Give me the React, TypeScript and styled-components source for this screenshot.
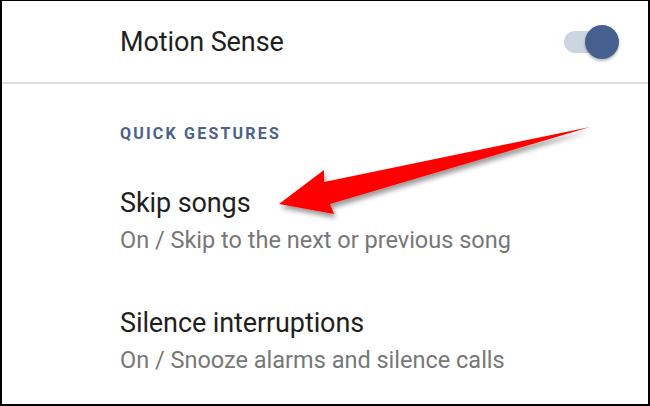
import React from "react";
import styled, { createGlobalStyle } from "styled-components";

const Global = createGlobalStyle`
  html, body { margin: 0; padding: 0; background: #fff; }
  body { font-family: Roboto, "Noto Sans", sans-serif; }
`;

const Frame = styled.div`
  position: relative;
  width: 650px;
  height: 406px;
  box-sizing: border-box;
  border-style: solid;
  border-color: #000;
  border-width: 1px 2px 2px 2px;
  padding-bottom: 6px;
  background: #fff;
  display: flex;
  flex-direction: column;
  overflow: hidden;
`;

const HeaderRow = styled.div`
  flex: 0 0 81px;
  display: flex;
  align-items: center;
  justify-content: space-between;
  padding: 0 29px 0 118px;
  box-sizing: border-box;
`;

const Title = styled.div`
  font-size: 27px;
  color: #1f1f1f;
  line-height: 32px;
  letter-spacing: -0.1px;
`;

const Switch = styled.div`
  position: relative;
  width: 55px;
  height: 34px;
`;

const Track = styled.div`
  position: absolute;
  left: 0;
  top: 6px;
  width: 46px;
  height: 22px;
  border-radius: 11px;
  background: #cdd5e1;
`;

const Thumb = styled.div`
  position: absolute;
  right: 0;
  top: 0;
  width: 34px;
  height: 34px;
  border-radius: 50%;
  background: #455f8e;
  box-shadow: 0 2px 3px rgba(0, 0, 0, 0.28);
`;

const Divider = styled.div`
  flex: 0 0 2px;
  background: #dedede;
`;

const Section = styled.div`
  flex: 1;
  display: flex;
  flex-direction: column;
  padding: 40px 0 0 118px;
`;

const SectionHeader = styled.div`
  font-size: 16px;
  font-weight: 700;
  letter-spacing: 2.2px;
  color: #4a6189;
  line-height: 20px;
  margin-bottom: 43px;
`;

const Item = styled.div`
  display: flex;
  flex-direction: column;
  gap: 7px;
  margin-bottom: 53px;
`;

const Summary = styled.div`
  font-size: 23.5px;
  color: #777777;
  line-height: 28px;
`;

const ArrowSvg = styled.svg`
  position: absolute;
  left: 0;
  top: 0;
  pointer-events: none;
`;

export default function App() {
  return (
    <>
      <Global />
      <Frame>
        <HeaderRow>
          <Title>Motion Sense</Title>
          <Switch>
            <Track />
            <Thumb />
          </Switch>
        </HeaderRow>
        <Divider />
        <Section>
          <SectionHeader>QUICK GESTURES</SectionHeader>
          <Item>
            <Title>Skip songs</Title>
            <Summary>On / Skip to the next or previous song</Summary>
          </Item>
          <Item>
            <Title>Silence interruptions</Title>
            <Summary>On / Snooze alarms and silence calls</Summary>
          </Item>
        </Section>
        <Divider />
        <ArrowSvg width="650" height="406" viewBox="0 0 650 406">
          <defs>
            <filter id="sh" x="-10%" y="-30%" width="130%" height="180%">
              <feGaussianBlur in="SourceAlpha" stdDeviation="2.5" />
              <feOffset dx="2" dy="4" result="b" />
              <feComponentTransfer>
                <feFuncA type="linear" slope="0.4" />
              </feComponentTransfer>
              <feMerge>
                <feMergeNode />
                <feMergeNode in="SourceGraphic" />
              </feMerge>
            </filter>
          </defs>
          <polygon
            filter="url(#sh)"
            fill="#ff0000"
            points="277,203 322,169 322,181 588,126 328,203 332,213"
          />
        </ArrowSvg>
      </Frame>
    </>
  );
}
